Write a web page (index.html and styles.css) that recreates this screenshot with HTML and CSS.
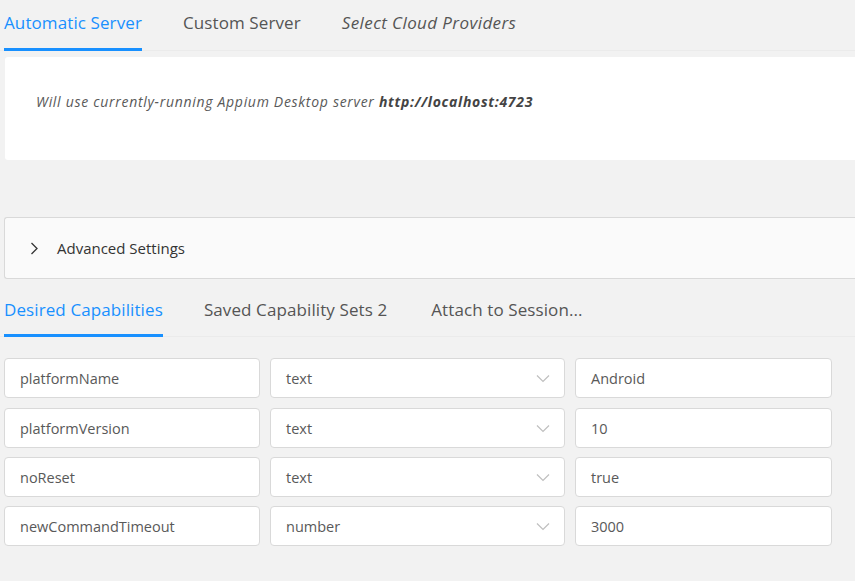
FILE: index.html
```html
<!DOCTYPE html>
<html>
<head>
<meta charset="utf-8">
<link rel="stylesheet" href="styles.css">
</head>
<body>
<div class="page">
  <div class="tabs top-tabs">
    <div class="tab active">Automatic Server</div>
    <div class="tab">Custom Server</div>
    <div class="tab italic">Select Cloud Providers</div>
  </div>
  <div class="server-box">
    <span class="server-text">Will use currently-running Appium Desktop server <b>http://localhost:4723</b></span>
  </div>
  <div class="advanced">
    <svg class="chev-right" width="9" height="13" viewBox="0 0 9 13"><path d="M1.5 1 L7 6.5 L1.5 12" fill="none" stroke="#333" stroke-width="1.3"/></svg>
    <span>Advanced Settings</span>
  </div>
  <div class="tabs cap-tabs">
    <div class="tab active">Desired Capabilities</div>
    <div class="tab">Saved Capability Sets 2</div>
    <div class="tab">Attach to Session...</div>
  </div>
  <div class="caps">
    <div class="row">
      <div class="field name">platformName</div>
      <div class="field select"><span>text</span><svg class="chev-down" width="14" height="9" viewBox="0 0 14 9"><path d="M1 1.5 L7 7.5 L13 1.5" fill="none" stroke="#bfbfbf" stroke-width="1.2"/></svg></div>
      <div class="field value">Android</div>
    </div>
    <div class="row">
      <div class="field name">platformVersion</div>
      <div class="field select"><span>text</span><svg class="chev-down" width="14" height="9" viewBox="0 0 14 9"><path d="M1 1.5 L7 7.5 L13 1.5" fill="none" stroke="#bfbfbf" stroke-width="1.2"/></svg></div>
      <div class="field value">10</div>
    </div>
    <div class="row">
      <div class="field name">noReset</div>
      <div class="field select"><span>text</span><svg class="chev-down" width="14" height="9" viewBox="0 0 14 9"><path d="M1 1.5 L7 7.5 L13 1.5" fill="none" stroke="#bfbfbf" stroke-width="1.2"/></svg></div>
      <div class="field value">true</div>
    </div>
    <div class="row">
      <div class="field name">newCommandTimeout</div>
      <div class="field select"><span>number</span><svg class="chev-down" width="14" height="9" viewBox="0 0 14 9"><path d="M1 1.5 L7 7.5 L13 1.5" fill="none" stroke="#bfbfbf" stroke-width="1.2"/></svg></div>
      <div class="field value">3000</div>
    </div>
  </div>
</div>
</body>
</html>
```

FILE: styles.css
```css
* { box-sizing: border-box; }
html, body {
  margin: 0;
  padding: 0;
  background: #f2f2f2;
  font-family: "Open Sans", "Noto Sans", sans-serif;
  color: #595959;
}
.page {
  width: 855px;
  height: 581px;
  overflow: hidden;
}
.tabs {
  display: flex;
  padding-left: 4px;
  gap: 41px;
  font-size: 17px;
  letter-spacing: 0.1px;
  border-bottom: 1px solid #ebebeb;
}
.tab {
  position: relative;
  color: #555;
  white-space: nowrap;
  line-height: 24px;
}
.tab.active { color: #1890ff; }
.tab.active::after {
  content: "";
  position: absolute;
  left: 0;
  right: 0;
  bottom: -1px;
  height: 3px;
  background: #1890ff;
}
.italic {
  font-style: italic;
  letter-spacing: 0.4px;
}
.top-tabs {
  height: 51px;
}
.top-tabs .tab {
  padding-top: 11px;
}
.server-box {
  margin: 6px 0 0 5px;
  height: 103px;
  background: #fff;
  border-radius: 3px 0 0 3px;
  padding: 33px 0 0 31px;
}
.server-text {
  font-size: 14px;
  line-height: 20px;
  font-style: italic;
  letter-spacing: 0.7px;
  color: #595959;
}
.server-text b { color: #444; }
.advanced {
  margin: 57px 0 0 4px;
  height: 62px;
  background: #fafafa;
  border: 1px solid #d9d9d9;
  border-right: none;
  border-radius: 3px 0 0 3px;
  display: flex;
  align-items: center;
  padding-left: 25px;
  gap: 18px;
  font-size: 15px;
  color: #333;
}
.cap-tabs {
  height: 58px;
}
.cap-tabs .tab {
  padding-top: 19px;
}
.cap-tabs .tab:last-child { margin-left: 3px; }
.caps {
  margin-top: 21px;
  padding-left: 4px;
  display: flex;
  flex-direction: column;
  gap: 9px;
}
.row {
  display: flex;
  gap: 10px;
}
.row:nth-child(2) { margin-top: 1px; }
.field {
  height: 40px;
  background: #fff;
  border: 1px solid #d9d9d9;
  border-radius: 4px;
  display: flex;
  align-items: center;
  padding: 1px 0 0 15px;
  font-size: 14.5px;
  color: #595959;
}
.name { width: 256px; }
.select {
  width: 295px;
  justify-content: space-between;
  padding-right: 14px;
}
.select .chev-down { margin-top: -1px; }
.value { width: 257px; }
```
